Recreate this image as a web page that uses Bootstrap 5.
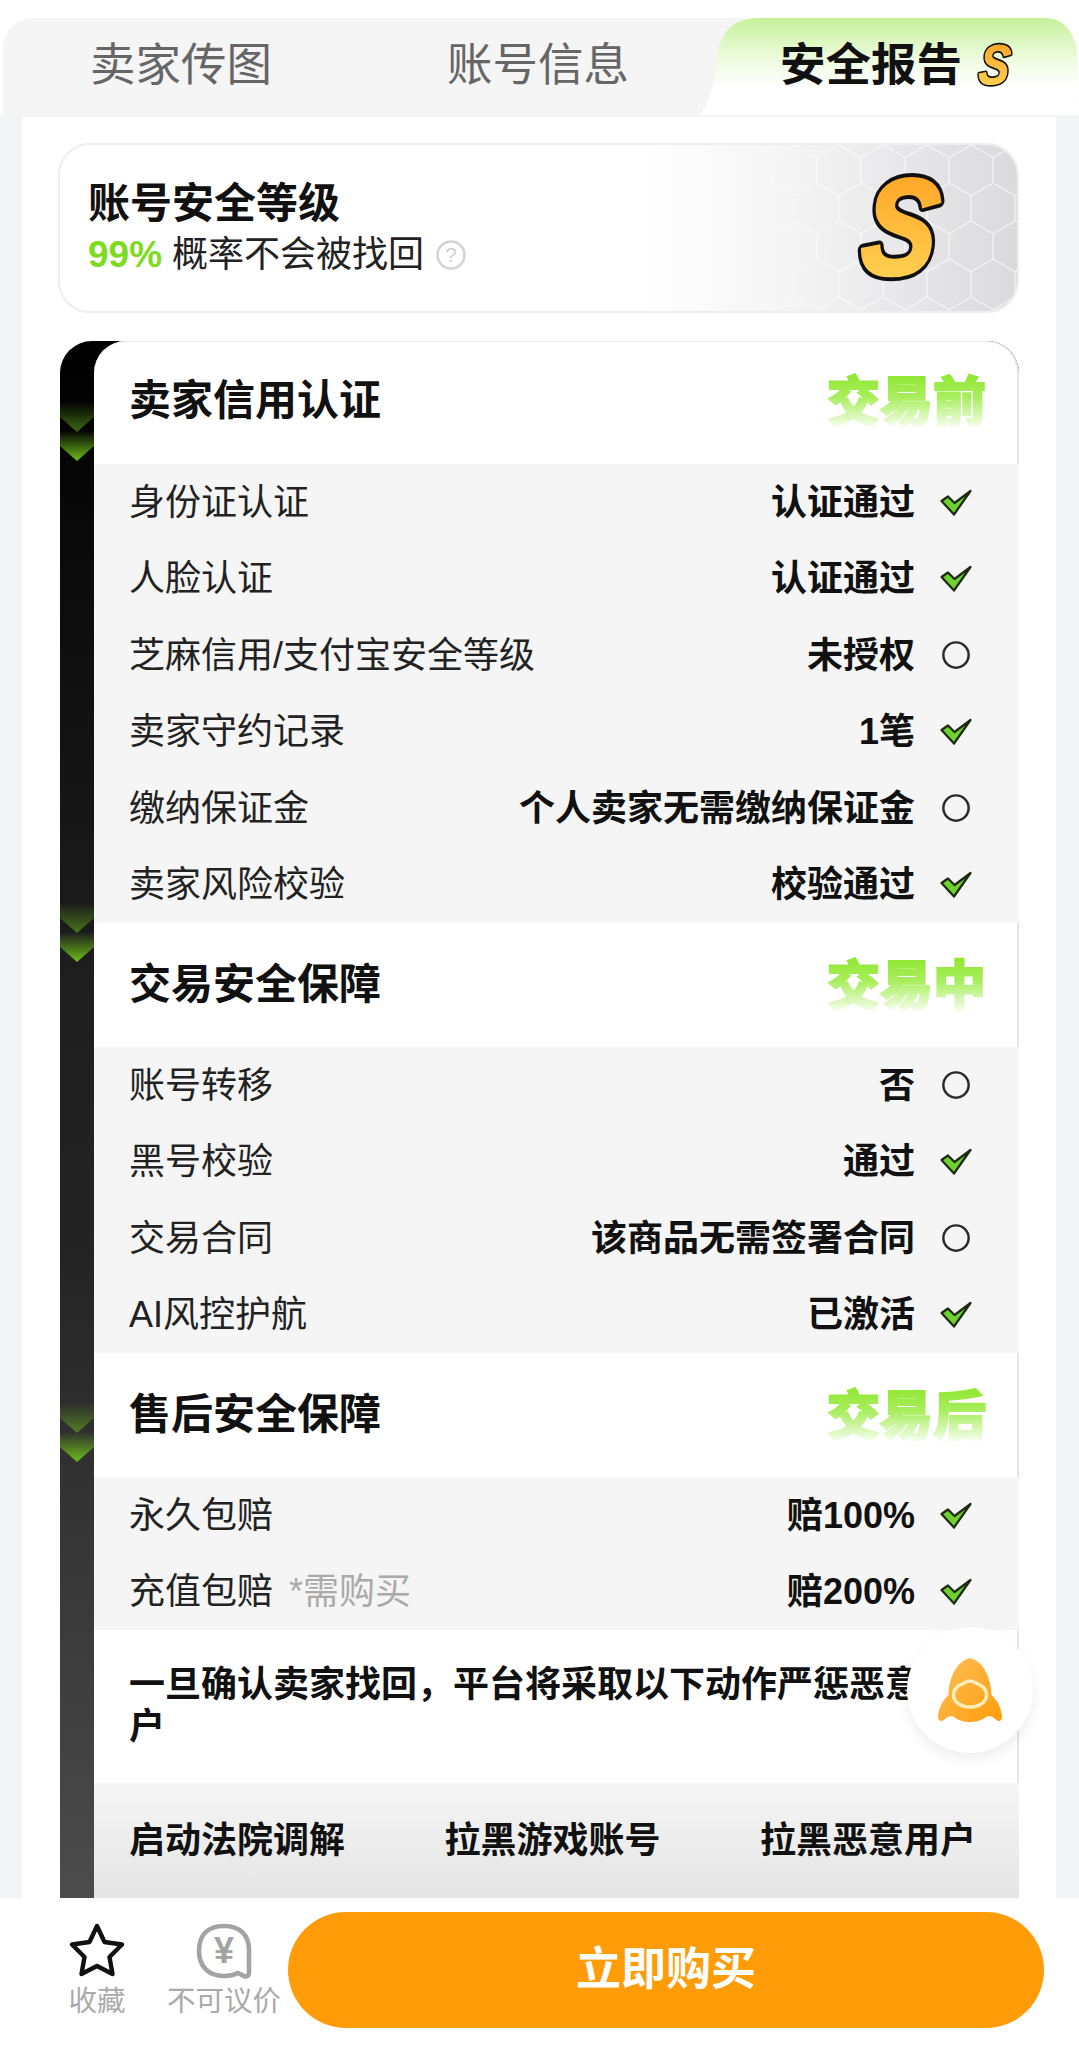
<!DOCTYPE html>
<html lang="zh-CN">
<head>
  <meta charset="UTF-8">
  <title>安全报告</title>
  <link href="https://cdn.jsdelivr.net/npm/bootstrap@5.3.3/dist/css/bootstrap.min.css" rel="stylesheet">
  <style>
    html, body { margin: 0; height: 2051px; overflow: hidden; background: #fff; }
    body { font-family: "Liberation Sans", "Noto Sans CJK SC", sans-serif; color: #111; line-height: 1.2; }
    .app-shell { width: 1079px; height: 2051px; padding-top: 18px; position: relative; overflow: hidden; }

    /* tabs */
    .tab-bar { height: 97px; margin-left: 3px; background: #f5f5f5; border-radius: 30px 30px 0 0; }
    .tab-item { font-size: 45.5px; color: #666; text-align: center; line-height: 96px; }
    .tab-one { width: 356px; }
    .tab-two { width: 358px; }
    .tab-on { flex: 1; margin-left: -17px; padding-left: 80px; font-weight: 700; color: #111; gap: 9px; position: relative; }
    .tab-shape { position: absolute; left: 0; top: 0; width: 100%; height: 97px; }
    .tab-label { position: relative; }
    .tab-logo { position: relative; margin-top: 24px; overflow: visible; }

    .main-area { height: 1783px; background: #f3f4f6; padding: 2px 23px 0 22px; overflow: hidden; }
    .main-panel { height: 100%; background: #fff; padding: 26px 37px 0 36px; }

    /* level card */
    .level-box {
      height: 170px; border: 2px solid #eee; border-radius: 32px; padding: 32px 28px; position: relative; overflow: hidden;
    }
    .level-bg { position: absolute; top: 0; right: 0; width: 420px; height: 100%; }
    .level-logo { position: absolute; right: 76px; top: 27px; overflow: visible; }
    .level-title { font-size: 42px; font-weight: 700; line-height: 54px; position: relative; }
    .level-sub { font-size: 36px; line-height: 48px; position: relative; gap: 11px; color: #222; }
    .level-pct { color: #7ddc1f; font-weight: 700; font-size: 37px; }

    /* report */
    .report-box {
      margin: 28px 0 0 2px; height: 1600px; border-radius: 32px 32px 0 0; position: relative; overflow: hidden; padding-left: 34px;
      background: linear-gradient(180deg, #000 0, #1e1e1e 640px, #232323 900px, #4c4c4c 1560px);
    }
    .report-inner { background: #fff; border-radius: 32px 32px 0 0; box-shadow: inset 0 1px 0 #e8e8e8, inset -2px 0 0 #e6e6e6; height: 100%; }
    .arrow-mark {
      position: absolute; left: 0; width: 34px; height: 30px;
      background: linear-gradient(180deg, rgba(110,190,25,0), #6dbd1a);
      clip-path: polygon(0 0, 100% 0, 100% 50%, 50% 100%, 0 50%);
    }
    .arrow-dim { opacity: .55; }
    .sec-head { height: 124px; padding: 0 33px 0 35px; }
    .sec-head:first-child { height: 123px; padding-bottom: 3px; }
    .sec-title { font-size: 42px; font-weight: 700; }
    .sec-stage {
      font-size: 53px; font-weight: 900; line-height: 60px; margin-top: 4px;
      background: linear-gradient(180deg, #8fe72f 0, #a8ee5e 40%, rgba(190,245,130,.1) 92%);
      -webkit-background-clip: text; background-clip: text; color: transparent;
      -webkit-text-stroke: 2px transparent;
    }
    .sec-rows { background: #f5f5f5; }
    .row-line { height: 76.5px; padding: 0 47px 0 35px; font-size: 36px; color: #222; }
    .row-val { font-weight: 700; color: #111; margin-left: auto; }
    .row-ico { width: 32px; margin-left: 25px; flex: none; display: flex; justify-content: center; }
    .row-note { color: #aaa; margin-left: 16px; }
    .punish-txt { height: 153px; padding: 34px 36px 0 35px; font-size: 36px; font-weight: 700; line-height: 42px; }
    .punish-list {
      height: 116px; padding: 0 43px 0 35px; font-size: 36px; font-weight: 700;
      background: linear-gradient(180deg, #f5f5f5, #e5e5e5);
    }

    /* float rocket */
    .rocket-btn {
      position: absolute; left: 907px; top: 1627px; width: 126px; height: 126px; border-radius: 50%;
      background: #fff; box-shadow: 0 6px 14px rgba(0,0,0,.07);
    }

    /* bottom bar */
    .foot-bar { height: 153px; background: #fff; padding: 14px 35px 0 0; align-items: flex-start; position: relative; }
    .foot-item { color: #aaa; font-size: 28.5px; text-align: center; line-height: 36px; margin-top: 11px; }
    .foot-one { width: 70px; margin-left: 62px; }
    .foot-two { width: 122px; margin-left: 31px; }
    .foot-ico { height: 60px; }
    .buy-btn {
      width: 756px; height: 116px; margin-left: 3px; border: 0; border-radius: 58px; background: #ff9c07; color: #fff;
      font-size: 45px; font-weight: 700;
    }
  </style>
</head>
<body>
<div class="app-shell d-flex flex-column">
  <svg width="0" height="0" class="position-absolute">
    <defs>
      <linearGradient id="sGrad" x1="0" y1="0" x2="0" y2="1">
        <stop offset="0" stop-color="#ff9d1e"/><stop offset="1" stop-color="#ffd95a"/>
      </linearGradient>
      <linearGradient id="tabGrad" x1="0" y1="0" x2="0" y2="1">
        <stop offset="0" stop-color="#c6f19b"/><stop offset=".42" stop-color="#eefbdf"/><stop offset=".72" stop-color="#fff"/>
      </linearGradient>
      <symbol id="checkMark" viewBox="0 0 32 27">
        <path d="M1.5 12 L8 7.5 L14.5 14 L30.5 2 L14 25.5 Z" fill="#6fd12e" stroke="#1c2a12" stroke-width="2.2" stroke-linejoin="round"/>
      </symbol>
      <symbol id="openMark" viewBox="0 0 32 32">
        <circle cx="16" cy="16" r="13.5" fill="none" stroke="#2a2a2a" stroke-width="2.6"/>
      </symbol>
    </defs>
  </svg>

  <div class="tab-bar d-flex flex-shrink-0">
    <div class="tab-item tab-one">卖家传图</div>
    <div class="tab-item tab-two">账号信息</div>
    <div class="tab-item tab-on d-flex align-items-start">
      <svg class="tab-shape" viewBox="0 0 376 97" preserveAspectRatio="none">
        <path d="M342 0 C360 0 370 12 374 32 L376 97 L376 0 Z" fill="#fff"/>
        <path d="M0 97 C12 80 14 60 17 40 C20 14 32 0 60 0 L342 0 C360 0 370 12 374 32 L376 97 Z" fill="url(#tabGrad)"/>
      </svg>
      <span class="tab-label">安全报告</span>
      <svg class="tab-logo" width="42" height="48" viewBox="0 0 42 48">
        <text x="21" y="42" text-anchor="middle" font-family="Liberation Sans" font-weight="700" font-style="italic" font-size="56" stroke="#111" stroke-width="4.5" stroke-linejoin="round" transform="translate(9 0) skewX(-6) scale(.82 1)">S</text>
        <text x="21" y="42" text-anchor="middle" font-family="Liberation Sans" font-weight="700" font-style="italic" font-size="56" fill="url(#sGrad)" stroke="url(#sGrad)" stroke-width="1" transform="translate(9 0) skewX(-6) scale(.82 1)">S</text>
      </svg>
    </div>
  </div>

  <div class="main-area flex-shrink-0">
    <div class="main-panel">
      <div class="level-box">
        <svg class="level-bg" viewBox="0 0 420 166" preserveAspectRatio="none">
          <defs>
            <linearGradient id="fadeBg" x1="0" y1="0" x2="1" y2="0">
              <stop offset=".1" stop-color="#fff"/><stop offset=".45" stop-color="#f5f5f5"/><stop offset="1" stop-color="#dadade"/>
            </linearGradient>
            <linearGradient id="fadeMask" x1="0" y1="0" x2="1" y2="0">
              <stop offset=".3" stop-color="#000"/><stop offset=".6" stop-color="#fff"/>
            </linearGradient>
            <mask id="hexFade"><rect width="420" height="166" fill="url(#fadeMask)"/></mask>
            <pattern id="hexCells" width="44" height="76" patternUnits="userSpaceOnUse">
              <path d="M22 0 L44 12.7 V38 L22 50.7 L0 38 V12.7 Z M22 50.7 V76" fill="none" stroke="#fff" stroke-opacity=".6" stroke-width="1.4"/>
            </pattern>
          </defs>
          <rect width="420" height="166" fill="url(#fadeBg)"/>
          <rect width="420" height="166" fill="url(#hexCells)" mask="url(#hexFade)"/>
        </svg>
        <svg class="level-logo" width="92" height="112" viewBox="0 0 92 112">
          <text x="46" y="102" text-anchor="middle" font-family="Liberation Sans" font-weight="700" font-style="italic" font-size="136" stroke="#111" stroke-width="12" stroke-linejoin="round" transform="translate(20 0) skewX(-6) scale(.82 1)">S</text>
          <text x="46" y="102" text-anchor="middle" font-family="Liberation Sans" font-weight="700" font-style="italic" font-size="136" fill="url(#sGrad)" stroke="url(#sGrad)" stroke-width="4" transform="translate(20 0) skewX(-6) scale(.82 1)">S</text>
        </svg>
        <div class="level-title">账号安全等级</div>
        <div class="level-sub d-flex align-items-center">
          <span><span class="level-pct">99%</span> 概率不会被找回</span>
          <svg width="32" height="32" viewBox="0 0 32 32"><circle cx="16" cy="16" r="13.5" fill="none" stroke="#d4d4d4" stroke-width="2.6"/><text x="16" y="23" text-anchor="middle" font-size="20" font-family="Liberation Sans" fill="#cfcfcf">?</text></svg>
        </div>
      </div>

      <div class="report-box">
        <span class="arrow-mark arrow-dim" style="top:61px"></span>
        <span class="arrow-mark" style="top:90px"></span>
        <span class="arrow-mark arrow-dim" style="top:562px"></span>
        <span class="arrow-mark" style="top:591px"></span>
        <span class="arrow-mark arrow-dim" style="top:1062px"></span>
        <span class="arrow-mark" style="top:1091px"></span>
        <div class="report-inner" id="reportInner"></div>
      </div>
    </div>
  </div>

  <div class="foot-bar d-flex flex-shrink-0">
    <div class="foot-item foot-one">
      <div class="foot-ico d-flex justify-content-center">
        <svg width="56" height="54" viewBox="0 0 56 54"><path d="M28 3 L35.5 19 L53 21.5 L40.5 34 L43.5 51 L28 43 L12.5 51 L15.5 34 L3 21.5 L20.5 19 Z" fill="none" stroke="#111" stroke-width="4.4" stroke-linejoin="round"/></svg>
      </div>
      收藏
    </div>
    <div class="foot-item foot-two">
      <div class="foot-ico d-flex justify-content-center">
        <svg width="56" height="56" viewBox="0 0 56 56"><path d="M28 3 C44 3 53 12 53 27 C53 35 53 42 53 50 C53 53 51 54 48 53 L42 50 C38 52 33 53 28 53 C12 53 3 43 3 28 C3 12 12 3 28 3 Z" fill="none" stroke="#a3a3a3" stroke-width="4.6"/><text x="28" y="40" text-anchor="middle" font-size="36" font-weight="700" font-family="Liberation Sans" fill="#a3a3a3">¥</text></svg>
      </div>
      不可议价
    </div>
    <button class="buy-btn" type="button">立即购买</button>
  </div>

  <div class="rocket-btn d-flex align-items-center justify-content-center">
    <svg width="66" height="66" viewBox="0 0 66 66">
      <defs><linearGradient id="rocketGrad" x1="0" y1="0" x2="1" y2="1"><stop offset="0" stop-color="#fdc05a"/><stop offset="1" stop-color="#ff9c0a"/></linearGradient></defs>
      <path d="M33 1 C46 4 54 20 54.5 38 C60 43 64 50 65 59 C65 65 61 65 58 62 C55 59 52 58 49 60 C44 64 38 65 33 65 C28 65 22 64 17 60 C14 58 11 59 8 62 C5 65 1 65 1 59 C2 50 6 43 11.5 38 C12 20 20 4 33 1 Z" fill="url(#rocketGrad)"/>
      <path d="M33 24 C36 24 38 26 41 27 C46 29 49.5 33 49.5 38 C49.5 46 41 50 33 50 C25 50 16.5 46 16.5 38 C16.5 33 20 29 25 27 C28 26 30 24 33 24 Z" fill="none" stroke="#ffeeb8" stroke-width="3.4"/>
    </svg>
  </div>
</div>

<script>
  // 报告内容
  const sections = [
    { title: "卖家信用认证", stage: "交易前", rows: [
      ["身份证认证", "认证通过", true],
      ["人脸认证", "认证通过", true],
      ["芝麻信用/支付宝安全等级", "未授权", false],
      ["卖家守约记录", "1笔", true],
      ["缴纳保证金", "个人卖家无需缴纳保证金", false],
      ["卖家风险校验", "校验通过", true]
    ]},
    { title: "交易安全保障", stage: "交易中", rows: [
      ["账号转移", "否", false],
      ["黑号校验", "通过", true],
      ["交易合同", "该商品无需签署合同", false],
      ["AI风控护航", "已激活", true]
    ]},
    { title: "售后安全保障", stage: "交易后", rows: [
      ["永久包赔", "赔100%", true],
      ["充值包赔", "赔200%", true, "*需购买"]
    ]}
  ];

  function iconHtml(ok) {
    if (ok) return '<svg width="32" height="27"><use href="#checkMark"/></svg>';
    return '<svg width="30" height="30" viewBox="0 0 32 32"><use href="#openMark" width="32" height="32"/></svg>';
  }

  let html = "";
  sections.forEach(sec => {
    html += `<div class="sec-head d-flex align-items-center justify-content-between">
      <span class="sec-title">${sec.title}</span><span class="sec-stage">${sec.stage}</span></div>
      <div class="sec-rows">`;
    sec.rows.forEach(r => {
      const note = r[3] ? `<span class="row-note">${r[3]}</span>` : "";
      html += `<div class="row-line d-flex align-items-center"><span>${r[0]}</span>${note}
        <span class="row-val">${r[1]}</span><span class="row-ico">${iconHtml(r[2])}</span></div>`;
    });
    html += "</div>";
  });
  html += `<div class="punish-txt">一旦确认卖家找回，平台将采取以下动作严惩恶意用户</div>
    <div class="punish-list d-flex align-items-center justify-content-between">
      <span>启动法院调解</span><span>拉黑游戏账号</span><span>拉黑恶意用户</span></div>`;
  document.getElementById("reportInner").innerHTML = html;
</script>
<script src="https://cdn.jsdelivr.net/npm/bootstrap@5.3.3/dist/js/bootstrap.bundle.min.js"></script>
</body>
</html>
